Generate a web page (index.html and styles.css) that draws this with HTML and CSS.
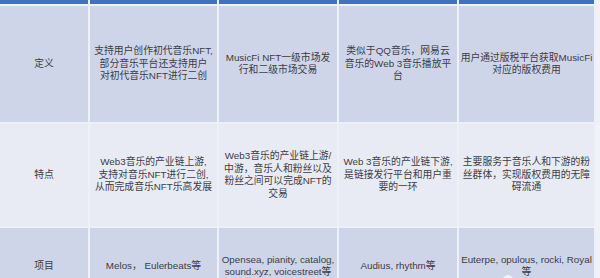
FILE: index.html
```html
<!DOCTYPE html>
<html lang="zh-CN">
<head>
    <meta charset="UTF-8">
    <title>Web3音乐</title>
    <link rel="stylesheet" href="styles.css">
</head>
<body>
<div class="table">
    <!--表头-->
    <div class="head"></div>
    <div class="head"></div>
    <div class="head"></div>
    <div class="head"></div>
    <div class="head"></div>

    <div class="cell odd">定义</div>
    <div class="cell odd">支持用户创作初代音乐NFT,<br>部分音乐平台还支持用户<br>对初代音乐NFT进行二创</div>
    <div class="cell odd">MusicFi NFT一级市场发<br>行和二级市场交易</div>
    <div class="cell odd">类似于QQ音乐，网易云<br>音乐的Web 3音乐播放平<br>台</div>
    <div class="cell odd">用户通过版税平台获取MusicFi<br>对应的版权费用</div>

    <div class="cell even">特点</div>
    <div class="cell even">Web3音乐的产业链上游,<br>支持对音乐NFT进行二创,<br>从而完成音乐NFT乐高发展</div>
    <div class="cell even">Web3音乐的产业链上游/<br>中游，音乐人和粉丝以及<br>粉丝之间可以完成NFT的<br>交易</div>
    <div class="cell even">Web 3音乐的产业链下游,<br>是链接发行平台和用户重<br>要的一环</div>
    <div class="cell even">主要服务于音乐人和下游的粉<br>丝群体，实现版权费用的无障<br>碍流通</div>

    <div class="cell odd">项目</div>
    <div class="cell odd">Melos， Eulerbeats等</div>
    <div class="cell odd">Opensea, pianity, catalog,<br>sound.xyz, voicestreet等</div>
    <div class="cell odd">Audius, rhythm等</div>
    <div class="cell odd">Euterpe, opulous, rocki, Royal<br>等</div>
</div>
<!--水印-->
<div class="mark">
    <svg width="14" height="10" viewBox="0 0 14 10"><circle cx="5" cy="6" r="5" fill="#fff"/><circle cx="10" cy="8" r="4" fill="#fff"/></svg>
</div>
</body>
</html>
```

FILE: styles.css
```css
*{
    margin: 0;
    padding: 0;
}
body{
    width: 600px;
    height: 278px;
    overflow: hidden;
    background-color: #f0f2f8;
    font-family: "Liberation Sans", "Noto Sans CJK SC", sans-serif;
    position: relative;
}
.table{
    display: grid;
    grid-template-columns: 88px 127px 118px 118px 135px;
    grid-template-rows: 4px 116px 102px 76px;
    gap: 2px;
    width: 596px;
    background-color: #eef0f7;
}
.head{
    background-color: #4570c2;
}
.cell{
    display: flex;
    align-items: center;
    justify-content: center;
    text-align: center;
    white-space: nowrap;
    font-size: 9.8px;
    line-height: 12.5px;
    color: #3c3c44;
    overflow: hidden;
}
.odd{
    background-color: #cfd5e9;
}
.even{
    background-color: #e9ebf4;
}
.mark{
    position: absolute;
    left: 503px;
    top: 270px;
    opacity: 0.7;
}
```
